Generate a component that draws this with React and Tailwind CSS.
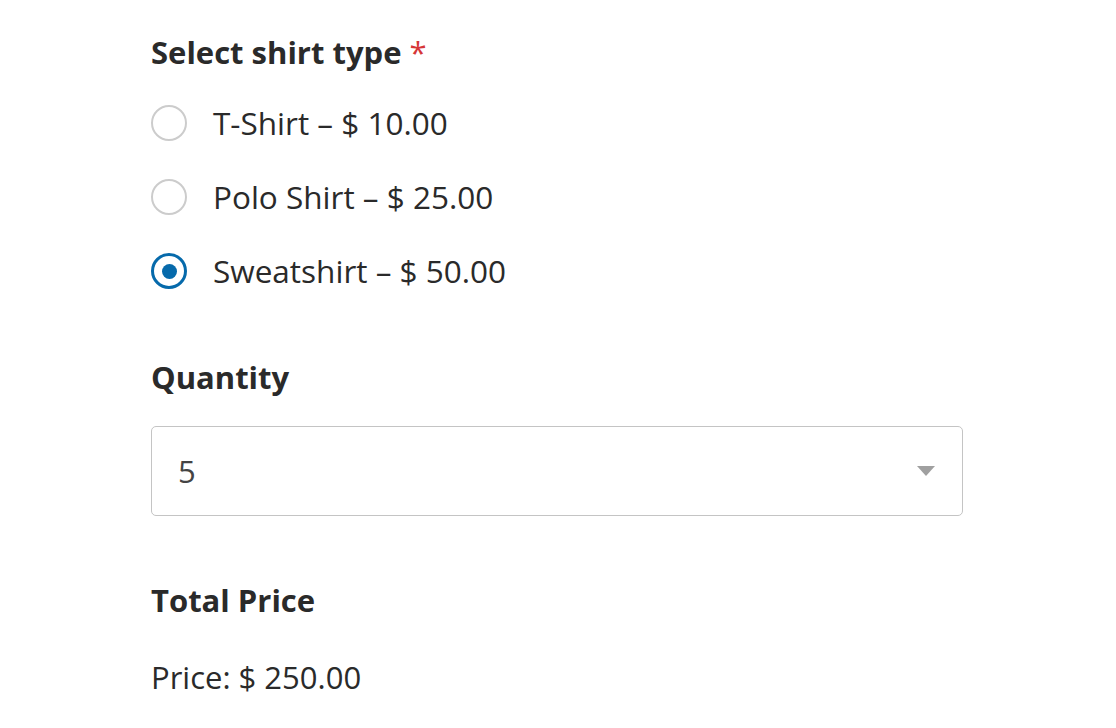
export default function App() {
  const options = [
    { label: "T-Shirt – $ 10.00", checked: false },
    { label: "Polo Shirt – $ 25.00", checked: false },
    { label: "Sweatshirt – $ 50.00", checked: true },
  ];
  return (
    <div
      className="w-[1116px] h-[728px] bg-white text-[#2a2a2a] overflow-hidden pl-[151px] pt-[32px]"
      style={{ fontFamily: '"Open Sans", "Noto Sans", sans-serif' }}
    >
      <div className="text-[31px] leading-[40px] font-bold">
        Select shirt type <span className="text-[#d63637] font-normal">*</span>
      </div>
      <div className="mt-[14px] flex flex-col">
        {options.map((o) => (
          <div key={o.label} className="h-[74px] flex items-center">
            {o.checked ? (
              <div className="w-[36px] h-[36px] rounded-full border-[3px] border-[#066aab] flex items-center justify-center">
                <div className="w-[15px] h-[15px] rounded-full bg-[#066aab]" />
              </div>
            ) : (
              <div className="w-[36px] h-[36px] rounded-full border-2 border-[#cccccc]" />
            )}
            <span className="ml-[26px] text-[31.5px] leading-[40px]">{o.label}</span>
          </div>
        ))}
      </div>
      <div className="mt-[49px] text-[31px] leading-[40px] font-bold">Quantity</div>
      <div className="mt-[29px] w-[812px] h-[90px] border border-[#c4c4c4] rounded-[5px] flex items-center justify-between pl-[26px] pr-[27px]">
        <span className="text-[31px] leading-[40px] text-[#444]">5</span>
        <svg width="18" height="10" viewBox="0 0 18 10">
          <path d="M0 0 H18 L9 10 Z" fill="#a0a0a0" />
        </svg>
      </div>
      <div className="mt-[64px] text-[31px] leading-[40px] font-bold">Total Price</div>
      <div className="mt-[37px] text-[31px] leading-[40px]">Price: $ 250.00</div>
    </div>
  );
}
